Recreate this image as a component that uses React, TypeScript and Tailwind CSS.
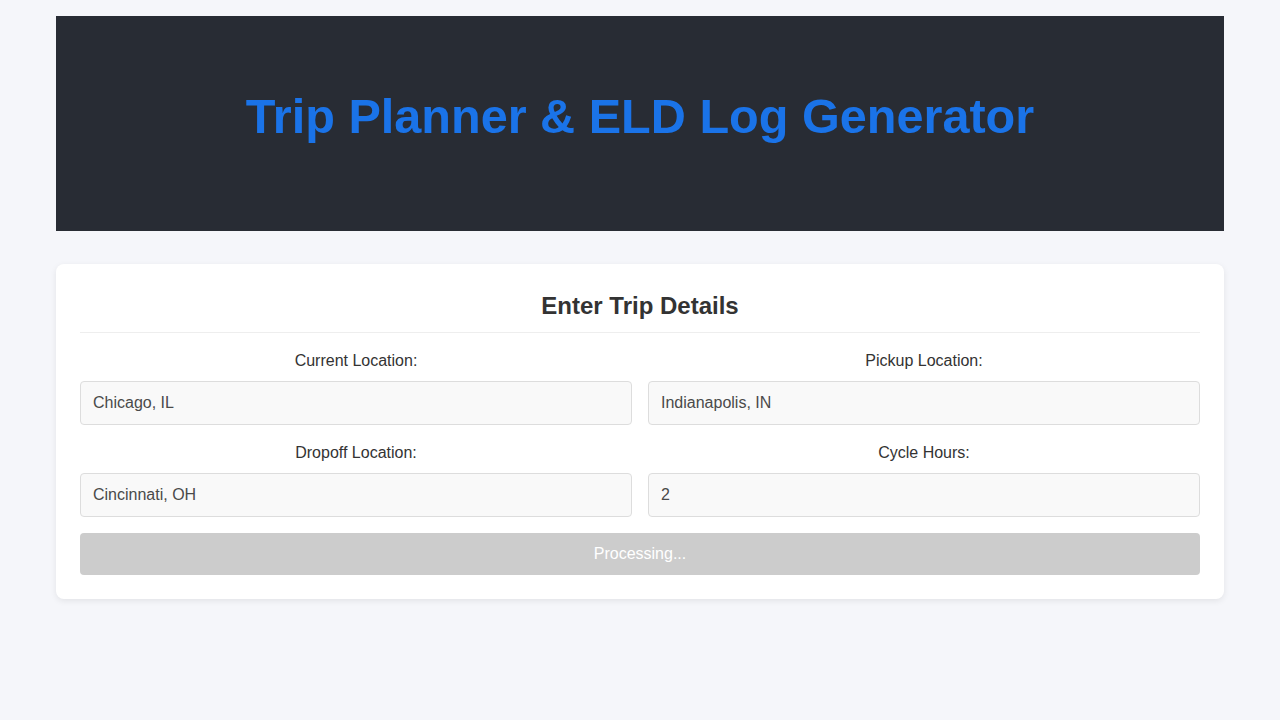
import React from 'react'

type Field = {
  label: string
  value: string
}

const fields: Field[] = [
  { label: 'Current Location:', value: 'Chicago, IL' },
  { label: 'Pickup Location:', value: 'Indianapolis, IN' },
  { label: 'Dropoff Location:', value: 'Cincinnati, OH' },
  { label: 'Cycle Hours:', value: '2' },
]

function FormField({ label, value }: Field) {
  return (
    <div className="flex flex-col">
      <label className="block pt-[1px] mb-[11px] text-center text-[16px] leading-[18px] text-[#333]">{label}</label>
      <input
        readOnly
        value={value}
        className="h-[44px] w-full rounded-[4px] border border-[#ddd] bg-[#f9f9f9] px-3 text-[16px] text-[#4a4a4a] outline-none"
      />
    </div>
  )
}

export default function App() {
  return (
    <div className="min-h-[720px] bg-[#f5f6fa] pt-4 font-['Liberation_Sans',Arial,sans-serif]">
      <div className="mx-auto w-[1168px]">
        {/* header */}
        <header className="h-[215px] bg-[#282c34] pt-[72px] text-center">
          <h1 className="text-[48.6px] leading-[56px] font-bold text-[#1a73e8]">
            Trip Planner &amp; ELD Log Generator
          </h1>
        </header>

        {/* form card */}
        <section className="mt-[33px] rounded-lg bg-white p-6 shadow-[0_2px_6px_rgba(0,0,0,0.08)]">
          <h2 className="mt-1 border-b border-[#eee] pb-3 text-center text-[24px] leading-[28px] font-bold text-[#333]">
            Enter Trip Details
          </h2>
          <div className="mt-[18px] grid grid-cols-2 gap-x-4 gap-y-[18px]">
            {fields.map((f) => (
              <FormField key={f.label} {...f} />
            ))}
          </div>
          <button
            disabled
            className="mt-4 h-[42px] w-full rounded-[4px] bg-[#ccc] text-[16px] text-white"
          >
            Processing...
          </button>
        </section>
      </div>
    </div>
  )
}
